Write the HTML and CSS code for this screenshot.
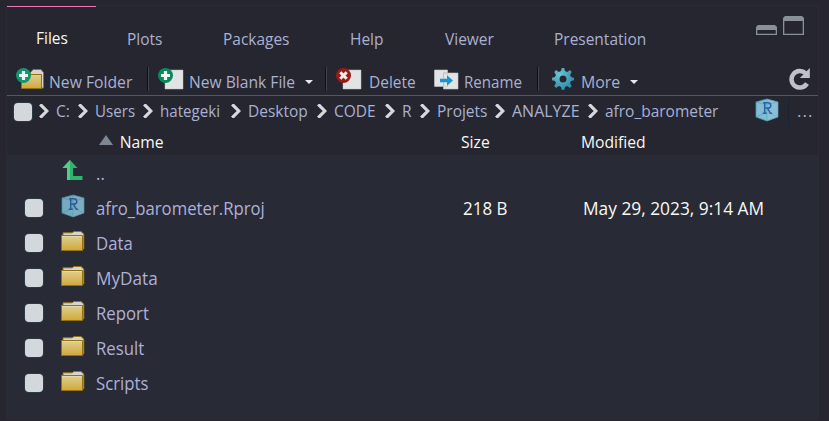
FILE: index.html
```
<!DOCTYPE html>
<html lang="en">
<head>
<meta charset="utf-8">
<title>Files</title>
<link rel="stylesheet" href="styles.css">
</head>
<body>
<svg class="defs" width="0" height="0">
  <defs>
    <linearGradient id="gold" x1="0" y1="0" x2="0" y2="1"><stop offset="0" stop-color="#dfd091"/><stop offset="1" stop-color="#d0a83c"/></linearGradient>
    <radialGradient id="teal" cx=".35" cy=".3" r=".8"><stop offset="0" stop-color="#6cc5d2"/><stop offset="1" stop-color="#2584a3"/></radialGradient>
    <symbol id="folder" viewBox="0 0 24 20">
      <path d="M2 6V1.800h9L13 .5h7l2.800 2.600V18H18z" fill="#d5d4d0" stroke="#94720f"/>
      <path d="M.5 4.500h21v15H.5z" fill="url(#gold)" stroke="#94720f"/>
      <path d="M1.500 5.500h19" stroke="#e5d9a6"/>
    </symbol>
    <symbol id="cube" viewBox="0 0 24 24">
      <path d="M12 1 23 4v15l-11 4L1 19V4z" fill="#84bcd3" stroke="#4c98ad" stroke-width=".8"/>
      <path d="M1 4l11 3 11-3M1 19l11-5 11 5M12 1v22" fill="none" stroke="#43a3b4" opacity=".6"/>
      <path d="M12 1 23 4v15l-11 4z" fill="#a0c7da" opacity=".3"/>
      <path d="M8 4.700h4.600q3.200 0 3.200 2.700t-3.200 2.700H9.700M9.700 4.700v10.600M7.700 15.300h4M12.400 10.200l3 5.100h1.700" fill="none" stroke="#2864a8" stroke-width="1.500"/>
    </symbol>
    <symbol id="chev" viewBox="0 0 10 14"><path d="M1.200 .3 7.800 7l-6.600 6.700" fill="none" stroke="#d5d8dc" stroke-width="3.200"/></symbol>
  </defs>
</svg>
<main class="panel">
  <nav class="tabs">
    <span class="active">Files</span><span>Plots</span><span>Packages</span><span>Help</span><span>Viewer</span><span>Presentation</span>
    <svg class="window" width="48" height="20" viewBox="0 0 48 20">
      <path d="M0 11l2-2h17l2 2v8H0zm1.300 3v3.700h18.400v-3.700z" fill="#88919a" fill-rule="evenodd"/>
      <path d="M27 2l2-2h17l2 2v17H27zm1.300 3v12.700h18.400V5z" fill="#88919a" fill-rule="evenodd"/>
    </svg>
  </nav>
  <div class="toolbar">
    <svg width="29" height="22" viewBox="0 0 29 22">
      <path d="M14 5l3-3.500h8l2.500 3V20H22" fill="#d5d4d0" stroke="#94720f"/>
      <path d="M5.500 6.500h20v14h-20z" fill="url(#gold)" stroke="#94720f"/>
      <circle cx="7.500" cy="7.500" r="7.500" fill="#12966e"/><path d="M7.500 3v9M3 7.500h9" stroke="#f1f4f3" stroke-width="3.200"/>
    </svg>
    <span class="t-folder">New Folder</span><i class="sep"></i>
    <svg width="27" height="22" viewBox="0 0 27 22">
      <path d="M7 2h18v19H7z" fill="#e2e3e4" stroke="#babdbf" stroke-width=".5"/>
      <circle cx="7.500" cy="7.500" r="7.500" fill="#098b58"/><path d="M7.500 3v9M3 7.500h9" stroke="#f1f4f3" stroke-width="3.200"/>
    </svg>
    <span class="t-blank">New Blank File</span>
    <svg class="caret" width="8" height="4" viewBox="0 0 8 4"><path d="M0 0h8L4 4z"/></svg><i class="sep"></i>
    <svg width="27" height="22" viewBox="0 0 27 22">
      <path d="M7 2h18v19H7z" fill="#e2e3e4" stroke="#babdbf" stroke-width=".5"/>
      <circle cx="7.500" cy="7.500" r="7.500" fill="#971c17"/><path d="M4.300 4.300l6.400 6.400M10.700 4.300l-6.400 6.400" stroke="#f1eeee" stroke-width="3"/>
    </svg>
    <span class="t-delete">Delete</span>
    <svg width="25" height="22" viewBox="0 0 25 22">
      <path d="M.5 2h13v16.500H.5zM9.500 5H24v16H9.500z" fill="#e2e3e4" stroke="#c4c7c8" stroke-width=".6"/>
      <path d="M9.500 18V5h4" fill="none" stroke="#b4b8bb" stroke-width=".7"/>
      <path d="M6 10.700h7V7.300l6 5.200-6 5.200v-3.400H6z" fill="#1497d0"/>
    </svg>
    <span class="t-rename">Rename</span><i class="sep"></i>
    <svg width="22" height="22" viewBox="-11 -11 22 22">
      <path fill="url(#teal)" fill-rule="evenodd" d="M-2-8l.7-3h2.600l.7 3 2.200.9 2.700-1.900 1.900 1.900L7.100-4.300 8-2l3 .7v2.600L8 2l-.9 2.200 1.700 2.800-1.900 1.900-2.700-1.800L2 8l-.7 3h-2.600L-2 8l-2.200-.9L-6.900 8.900-8.800 7l1.700-2.800L-8 2l-3-.7v-2.600L-8-2l.9-2.300L-8.800-7.100-6.900-9l2.700 1.900zM0-3.500A3.500 3.500 0 1 0 0 3.500 3.500 3.500 0 1 0 0-3.500z"/>
    </svg>
    <span class="t-more">More</span>
    <svg class="caret" width="8" height="4" viewBox="0 0 8 4"><path d="M0 0h8L4 4z"/></svg>
    <svg class="refresh" width="22" height="22" viewBox="0 0 22 22"><path d="M18 15.500A8.300 8.300 0 1 1 16.500 5.200" fill="none" stroke="#bec1c8" stroke-width="4.500"/><path d="M20.800 0v10h-10z" fill="#bec1c8"/></svg>
  </div>
  <div class="crumbs">
    <i class="check"></i>
    <svg><use href="#chev"/></svg><span class="c1">C:</span>
    <svg><use href="#chev"/></svg><span class="c2">Users</span>
    <svg><use href="#chev"/></svg><span class="c3">hategeki</span>
    <svg><use href="#chev"/></svg><span class="c4">Desktop</span>
    <svg><use href="#chev"/></svg><span class="c5">CODE</span>
    <svg><use href="#chev"/></svg><span class="c6">R</span>
    <svg><use href="#chev"/></svg><span class="c7">Projets</span>
    <svg><use href="#chev"/></svg><span class="c8">ANALYZE</span>
    <svg><use href="#chev"/></svg><span class="c9">afro_barometer</span>
    <svg class="project"><use href="#cube"/></svg><i class="rule"></i><span class="dots">...</span>
  </div>
  <div class="heading">
    <svg width="14" height="10" viewBox="0 0 14 10"><path d="M7 0l7 10H0z" fill="#7d8692"/></svg>
    <span class="name">Name</span><span>Size</span><span>Modified</span>
  </div>
  <section class="list">
    <div class="row"><i></i><svg class="up" viewBox="0 0 21 20"><path d="M8 0l7.500 8H11v8h9.500v4H5V8H.500z" fill="#30b46c"/><path d="M8 0v20H5V8H.500z" fill="#56c98b"/></svg><span>..</span></div>
    <div class="row"><i class="check"></i><svg class="cube"><use href="#cube"/></svg><span>afro_barometer.Rproj</span><span class="size">218 B</span><span class="date">May 29, 2023, 9:14 AM</span></div>
    <div class="row"><i class="check"></i><svg><use href="#folder"/></svg><span>Data</span></div>
    <div class="row"><i class="check"></i><svg><use href="#folder"/></svg><span class="wide">MyData</span></div>
    <div class="row"><i class="check"></i><svg><use href="#folder"/></svg><span>Report</span></div>
    <div class="row"><i class="check"></i><svg><use href="#folder"/></svg><span>Result</span></div>
    <div class="row"><i class="check"></i><svg><use href="#folder"/></svg><span>Scripts</span></div>
  </section>
</main>
</body>
</html>
```
FILE: styles.css
```
* { box-sizing: border-box; }
body { margin: 0; height: 421px; padding: 5px 9px 1px 6px; overflow: hidden; background: #262530; color: #a9b1d0; font: 17px/24px "Open Sans", "Noto Sans", sans-serif; white-space: nowrap; }
svg { display: block; flex: none; }
span { transform: scaleX(.91); transform-origin: 0 50%; }
.defs { position: absolute; }
.panel { width: 813px; height: 415px; border: 1px solid #2a2b35; border-bottom: 0; background: #262630; }
.tabs { display: grid; grid-template-columns: 29px 91px 96px 127px 95px 109px 202px 48px; height: 57px; padding-top: 21px; position: relative; }
.tabs::before { content: ""; width: 89px; height: 1px; background: #f174b8; position: absolute; top: 0; left: 0; }
.tabs .active { grid-column: 2; color: #f8f8f2; margin-top: -1px; }
.tabs .window { margin-top: -11px; }
.toolbar { display: flex; align-items: center; height: 33px; padding-left: 9px; border-bottom: 1px solid #515864; }
.toolbar span { flex: none; height: 24px; margin-top: 5px; }
.toolbar .sep { width: 2px; height: 24px; background: linear-gradient(90deg, #0f1015 50%, #43444c 50%); flex: none; }
.caret { fill: #e8e9ea; margin-top: 5px; }
.toolbar .t-folder { width: 98px; margin-left: 4px; transform: scaleX(.925); }
.toolbar .sep + svg { margin-left: 9px; }
.toolbar .t-blank { width: 116px; margin-left: 4px; transform: scaleX(.92); }
.caret + .sep { margin-left: 12px; }
.t-delete { width: 65px; margin-left: 6px; }
.toolbar .t-rename { width: 73px; margin-left: 5px; transform: scaleX(.89); }
.toolbar .t-rename + .sep + svg { margin-left: 13px; }
.toolbar .t-more { width: 49px; margin-left: 7px; transform: scaleX(.935); }
.refresh { margin-left: 151px; margin-top: -1px; }
.crumbs { display: flex; align-items: center; height: 31px; padding-left: 7px; }
.crumbs span { flex: none; margin-top: -1px; }
.crumbs svg { width: 10px; height: 14px; margin: -1px 7px 0 0; }
.crumbs .check { margin-right: 7px; }
.check { width: 18px; height: 18px; border-radius: 4px; background: #d3d8dc; box-shadow: 0 0 1px 1px #2c3d48; flex: none; }
.c1 { width: 22px; } .c2 { width: 48px; } .c3 { width: 71px; } .c4 { width: 69px; } .c5 { width: 51px; }
.c6 { width: 18px; } .c7 { width: 58px; } .c8 { width: 76px; } .c9 { width: 150px; }
.crumbs .c2, .crumbs .c3 { transform: scaleX(.89); }
.crumbs .c8 { transform: scaleX(.94); }
.crumbs .project { width: 24px; height: 24px; margin: -3px 9px 0 0; }
.rule { width: 1px; height: 30px; background: #182334; margin-right: 8px; }
.crumbs .dots { letter-spacing: 1px; transform: none; }
.heading { display: grid; grid-template-columns: 14px 348px 120px 220px; padding: 3px 0 0 92px; height: 28px; color: #f8f8f2; font-size: 16.5px; }
.heading svg { margin-top: 5px; }
.heading span { transform: scaleX(.95); }
.heading .name { padding-left: 7px; }
.list { height: 265px; background: #282a35; color: #aeb0d8; font-size: 18px; }
.row { display: grid; grid-template-columns: 36px 35px 367px 120px 250px; padding-left: 18px; height: 35px; align-items: center; }
.row .check { margin-left: -.5px; }
.row span { transform: scaleX(.93); }
.row .wide { transform: scaleX(.955); }
.row svg { width: 24px; height: 20px; margin-top: -3px; }
.row .cube { height: 24px; width: 24px; margin-top: -3px; opacity: .88; }
.row .up { margin: -5px 0 0 1px; width: 21px; }
.row .size, .row .date { color: #f8f8f2; font-size: 17.5px; padding-top: 1px; transform: scaleX(.99); }
.row .size { transform: scaleX(.97); }
```
